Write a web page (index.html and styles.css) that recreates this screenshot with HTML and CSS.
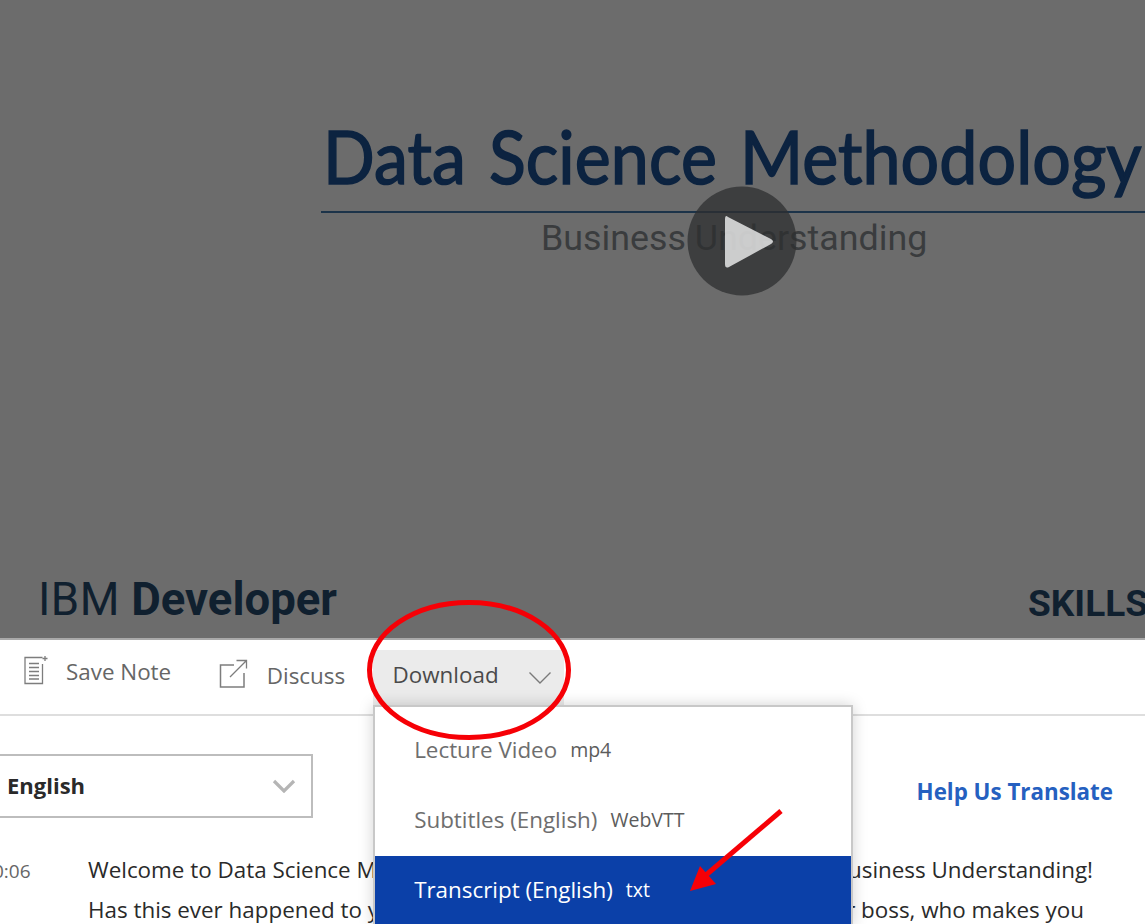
FILE: index.html
```html
<!DOCTYPE html>
<html lang="en">
<head>
<meta charset="utf-8">
<title>Data Science Methodology</title>
<link rel="stylesheet" href="styles.css">
</head>
<body>
<div class="page">
  <section class="video">
    <div class="slide-title">Data Science Methodology</div>
    <div class="slide-rule"></div>
    <div class="slide-sub">Business Understanding</div>
    <div class="slide-ibm"><span class="ibm-light">IBM</span> <span class="ibm-bold">Developer</span></div>
    <div class="slide-skills">SKILLS</div>
    <svg class="play" width="110" height="110" viewBox="0 0 110 110" aria-hidden="true">
      <circle cx="55" cy="55" r="54.500" fill="#2e2f30" fill-opacity="0.75"/>
      <path d="M41 31 Q38 28.500 38 33 V78 Q38 83 42 81 L84 58 Q88 55.500 84 53 Z" fill="#fff" fill-opacity="0.74"/>
    </svg>
  </section>

  <nav class="toolbar">
    <div class="tool tool-note">
      <svg class="icon-note" width="25" height="30" viewBox="0 0 25 30" aria-hidden="true">
        <path d="M18.500 2.500H1V28.500H18.500V9" fill="none" stroke="#7d7d7d" stroke-width="1.300"/>
        <path d="M5 8.500H15M5 12.500H15M5 16.500H15M5 20.500H15M5 24H15" fill="none" stroke="#7d7d7d" stroke-width="1.300"/>
        <path d="M21 1V6M18.500 3.500H23.500" fill="none" stroke="#7d7d7d" stroke-width="1.300"/>
      </svg>
      <span class="tool-label">Save Note</span>
    </div>
    <div class="tool tool-discuss">
      <svg class="icon-share" width="29" height="29" viewBox="0 0 29 29" aria-hidden="true">
        <path d="M15 6H1.500V28H25V14" fill="none" stroke="#7d7d7d" stroke-width="1.500"/>
        <path d="M11 18L27 2M17.500 1.500H27.500V9.500" fill="none" stroke="#7d7d7d" stroke-width="1.300"/>
      </svg>
      <span class="tool-label">Discuss</span>
    </div>
    <div class="download">
      <span class="download-label">Download</span>
      <svg width="24" height="14" viewBox="0 0 24 14" aria-hidden="true">
        <path d="M1.500 1.500L12 12L22.500 1.500" fill="none" stroke="#7a7a7a" stroke-width="1.400"/>
      </svg>
      <ul class="menu">
        <li class="menu-item"><span class="menu-name">Lecture Video</span><span class="menu-type">mp4</span></li>
        <li class="menu-item"><span class="menu-name">Subtitles (English)</span><span class="menu-type">WebVTT</span></li>
        <li class="menu-item menu-active"><span class="menu-name">Transcript (English)</span><span class="menu-type">txt</span></li>
      </ul>
    </div>
  </nav>

  <section class="content">
    <div class="lang-row">
      <div class="lang-select">
        <span class="lang-label">English</span>
        <svg width="24" height="14" viewBox="0 0 24 14" aria-hidden="true">
          <path d="M2 2L12 12L22 2" fill="none" stroke="#b5b5b5" stroke-width="3.200"/>
        </svg>
      </div>
      <a class="translate">Help Us Translate</a>
    </div>
    <div class="transcript">
      <span class="time">0:06</span>
      <div class="lines">
        <p>Welcome to Data Science Methodology 101 From Problem to Approach Business Understanding!</p>
        <p>Has this ever happened to you? You've been called into a meeting by your boss, who makes you</p>
      </div>
    </div>
  </section>

  <svg class="markup" width="1145" height="924" viewBox="0 0 1145 924" aria-hidden="true">
    <ellipse cx="469" cy="670" rx="99.500" ry="67.500" fill="none" stroke="#f60006" stroke-width="5"/>
    <path d="M781 811L706 875" fill="none" stroke="#f60006" stroke-width="5"/>
    <path d="M690 891L700 866L716 884Z" fill="#f60006"/>
  </svg>
</div>
</body>
</html>
```
FILE: styles.css
```css
* { box-sizing: border-box; }
html, body { margin: 0; padding: 0; background: #fff; }
body { width: 1145px; height: 924px; overflow: hidden; font-family: "Open Sans", "Liberation Sans", sans-serif; }
.page { position: relative; width: 1145px; height: 924px; overflow: hidden; }

.video { position: relative; height: 638px; background: #6c6c6c; overflow: hidden; }
.slide-title { position: absolute; left: 323px; top: 111px; font-family: "Lato", sans-serif; font-size: 74px; line-height: 90px; word-spacing: 6px; letter-spacing: 0.1px; color: #0c2340; white-space: nowrap; -webkit-text-stroke: 1.6px #0c2340; transform: scaleX(0.92); transform-origin: left center; }
.slide-rule { position: absolute; left: 321px; right: 0; top: 211px; height: 2px; background: #1c3349; }
.slide-sub { position: absolute; left: 541px; top: 214px; font-family: "Roboto", sans-serif; font-size: 35.800px; line-height: 48px; color: #3a3c3e; white-space: nowrap; }
.slide-ibm { position: absolute; left: 38px; top: 574px; font-family: "Roboto", sans-serif; font-size: 45.500px; line-height: 52px; color: #10202f; white-space: nowrap; }
.ibm-light { font-weight: 400; letter-spacing: 0.5px; }
.ibm-bold { font-weight: 700; }
.slide-skills { position: absolute; left: 1028px; top: 580px; font-family: "Roboto", sans-serif; font-weight: 700; font-size: 37px; line-height: 48px; color: #10202f; white-space: nowrap; }
.play { position: absolute; left: 687px; top: 186px; }

.toolbar { position: relative; display: flex; align-items: flex-start; height: 78px; background: #fff; border-top: 2px solid #a9a9a9; border-bottom: 2px solid #dedede; padding-left: 24px; font-size: 22.400px; color: #666; }
.tool { display: flex; align-items: flex-start; }
.tool-label { margin-top: 2px; line-height: 30px; }
.tool-note { margin-top: 15px; gap: 17px; }
.tool-discuss { margin-top: 19px; margin-left: 47.600px; gap: 19px; }
.icon-note, .icon-share { flex: none; }
.download { position: relative; display: flex; align-items: center; justify-content: space-between; width: 191px; height: 55px; margin-top: 10px; margin-left: 27.400px; padding: 0 12px 0 20px; background: #ebebeb; color: #4a4a4a; }
.download-label { padding-bottom: 6px; }
.menu { position: absolute; left: 0; top: 55px; width: 480px; margin: 0; padding: 9px 0 0; list-style: none; background: #fff; border: 2px solid #c8c8c8; border-bottom: 0; box-shadow: 0 0 14px rgba(0, 0, 0, 0.18); }
.menu-item { display: flex; align-items: center; gap: 13px; height: 70px; padding-left: 39.600px; padding-bottom: 3px; color: #6e6e6e; }
.menu-type { font-size: 19.500px; color: #5c5c5c; }
.menu-active { background: #0b40a8; color: #fff; }
.menu-active .menu-type { color: #fff; }

.content { padding-top: 38px; }
.lang-row { display: flex; align-items: flex-start; justify-content: space-between; padding-right: 32px; }
.lang-select { display: flex; align-items: center; justify-content: space-between; width: 320px; height: 64px; margin-left: -7px; padding: 0 15px 0 12px; border: 2px solid #bdbdbd; font-size: 22px; font-weight: 700; color: #2a2a2a; }
.lang-label { padding-bottom: 2px; }
.translate { margin-top: 20px; font-size: 22.350px; line-height: 36px; font-weight: 700; color: #2560c0; }
.transcript { display: flex; margin-top: 32px; }
.time { flex: none; width: 95px; margin-left: -7px; padding-top: 1px; font-size: 19px; line-height: 40px; color: #666; }
.lines { font-size: 22.400px; line-height: 40px; color: #2a2a2a; white-space: nowrap; }
.lines p { margin: 0; }

.markup { position: absolute; left: 0; top: 0; pointer-events: none; }
```
